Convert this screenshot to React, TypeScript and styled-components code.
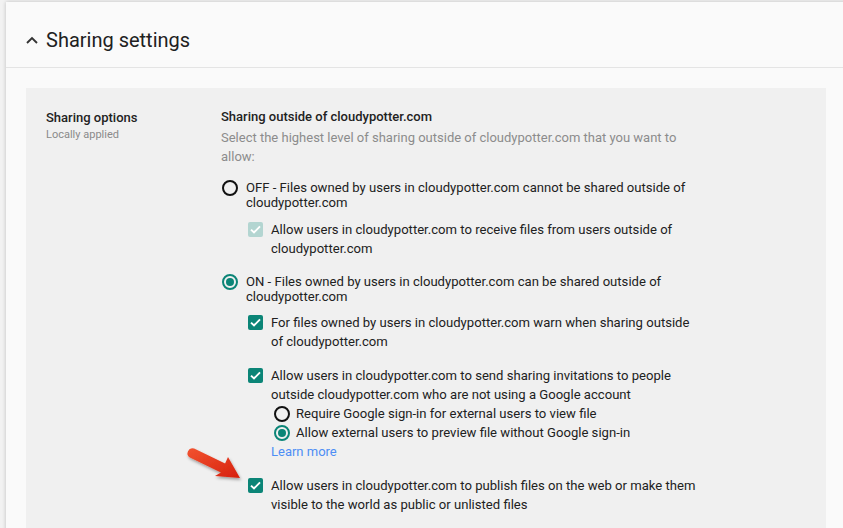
import React from "react";
import styled, { createGlobalStyle } from "styled-components";

const GlobalStyle = createGlobalStyle`
  html, body {
    margin: 0;
    padding: 0;
    background: #f2f2f2;
    font-family: Roboto, "Liberation Sans", Arial, sans-serif;
    overflow: hidden;
  }
`;

const TEAL = "#0b8577";

const Card = styled.div`
  margin: 2px 0 0 6px;
  width: 860px;
  height: 560px;
  background: #fafafa;
  box-shadow: 0 0 4px rgba(0, 0, 0, 0.22);
`;

const Header = styled.div`
  height: 55px;
  display: flex;
  align-items: center;
  padding: 10px 0 0 20px;
  border-bottom: 1px solid #e4e4e4;
`;

const Title = styled.h1`
  margin: 0 0 0 8px;
  font-size: 20px;
  font-weight: 400;
  color: #212121;
`;

const Body = styled.div`
  padding: 20px 0 0 20px;
`;

const Panel = styled.div`
  width: 800px;
  box-sizing: border-box;
  background: #f0f0f0;
  padding: 21px 20px 20px;
  display: grid;
  grid-template-columns: 175px 475px;
  border-bottom: 1px solid #f6f6f6;
  min-height: 440px;
`;

const LeftCol = styled.div`
  padding-top: 1px;
`;

const Label = styled.div`
  font-size: 13px;
  font-weight: 500;
  color: #222;
  line-height: 16px;
`;

const SubLabel = styled.div`
  font-size: 11px;
  color: #8a8a8a;
  line-height: 16px;
  margin-top: 1px;
`;

const Heading = styled.div`
  font-size: 13px;
  font-weight: 500;
  color: #222;
  line-height: 16px;
`;

const Desc = styled.div`
  font-size: 13px;
  color: #8c8c8c;
  line-height: 19px;
  margin-top: 3px;
`;

const Option = styled.div<{ indent?: number; top?: number }>`
  display: flex;
  align-items: flex-start;
  margin-left: ${(p) => p.indent ?? 0}px;
  margin-top: ${(p) => p.top ?? 0}px;
  position: relative;
`;

const OptionText = styled.div<{ lh?: number }>`
  font-size: 13.1px;
  color: #212121;
  line-height: ${(p) => p.lh ?? 19}px;
`;

const RadioCircle = styled.span<{ on?: boolean; sub?: boolean }>`
  flex: none;
  box-sizing: border-box;
  width: 16px;
  height: 16px;
  border-radius: 50%;
  border: 2px solid ${(p) => (p.on ? TEAL : "#111")};
  margin: ${(p) => (p.sub ? "2px 6px 0 0" : "0 8px 0 1px")};
  display: flex;
  align-items: center;
  justify-content: center;
  &::after {
    content: "";
    display: ${(p) => (p.on ? "block" : "none")};
    width: 8px;
    height: 8px;
    border-radius: 50%;
    background: ${TEAL};
  }
`;

const Box = styled.span<{ disabled?: boolean }>`
  flex: none;
  width: 15px;
  height: 15px;
  border-radius: 2px;
  background: ${(p) => (p.disabled ? "#b3d5d1" : TEAL)};
  margin: 2px 8px 0 0;
  display: flex;
  align-items: center;
  justify-content: center;
`;

const LearnMore = styled.a`
  display: block;
  font-size: 13px;
  line-height: 19px;
  color: #4d8ef5;
  text-decoration: none;
  margin-left: 50px;
`;

const Arrow = styled.svg`
  position: absolute;
  left: -64px;
  top: -32px;
  overflow: visible;
`;

const Check = () => (
  <svg width="11" height="9" viewBox="0 0 11 9">
    <path d="M1 4.6 L4 7.5 L10 1.3" stroke="#fff" strokeWidth="1.9" fill="none" />
  </svg>
);

type RadioProps = { on?: boolean; text: React.ReactNode; top?: number; sub?: boolean };

const Radio = ({ on, text, top, sub }: RadioProps) => (
  <Option top={top} indent={sub ? 53 : 0}>
    <RadioCircle on={on} sub={sub} />
    <OptionText lh={sub ? 19 : 15}>{text}</OptionText>
  </Option>
);

type CheckProps = { disabled?: boolean; text: React.ReactNode; top?: number; children?: React.ReactNode };

const CheckOption = ({ disabled, text, top, children }: CheckProps) => (
  <Option indent={27} top={top}>
    <Box disabled={disabled}>
      <Check />
    </Box>
    <OptionText>{text}</OptionText>
    {children}
  </Option>
);

export default function App() {
  return (
    <>
      <GlobalStyle />
      <Card>
        <Header>
          <svg width="12" height="8" viewBox="0 0 12 8">
            <path d="M1 7 L6 2 L11 7" stroke="#333" strokeWidth="1.9" fill="none" />
          </svg>
          <Title>Sharing settings</Title>
        </Header>
        <Body>
          <Panel>
            <LeftCol>
              <Label>Sharing options</Label>
              <SubLabel>Locally applied</SubLabel>
            </LeftCol>
            <div>
              <Heading>Sharing outside of cloudypotter.com</Heading>
              <Desc>Select the highest level of sharing outside of cloudypotter.com that you want to allow:</Desc>
              <Radio
                top={14}
                text="OFF - Files owned by users in cloudypotter.com cannot be shared outside of cloudypotter.com"
              />
              <CheckOption
                disabled
                top={10}
                text="Allow users in cloudypotter.com to receive files from users outside of cloudypotter.com"
              />
              <Radio
                on
                top={16}
                text="ON - Files owned by users in cloudypotter.com can be shared outside of cloudypotter.com"
              />
              <CheckOption
                top={9}
                text="For files owned by users in cloudypotter.com warn when sharing outside of cloudypotter.com"
              />
              <CheckOption
                top={15}
                text="Allow users in cloudypotter.com to send sharing invitations to people outside cloudypotter.com who are not using a Google account"
              />
              <Radio sub text="Require Google sign-in for external users to view file" />
              <Radio sub on text="Allow external users to preview file without Google sign-in" />
              <LearnMore href="#">Learn more</LearnMore>
              <CheckOption
                top={15}
                text="Allow users in cloudypotter.com to publish files on the web or make them visible to the world as public or unlisted files"
              >
                <Arrow width="60" height="40" viewBox="0 0 60 40">
                  <defs>
                    <linearGradient id="ag" x1="0" y1="0" x2="1" y2="1">
                      <stop offset="0" stopColor="#f25330" />
                      <stop offset="1" stopColor="#d6200e" />
                    </linearGradient>
                    <filter id="sh" x="-20%" y="-20%" width="150%" height="150%">
                      <feDropShadow dx="1" dy="2" stdDeviation="1.5" floodColor="#000" floodOpacity="0.35" />
                    </filter>
                  </defs>
                  <path
                    d="M10.1 4.5 L41.1 19.5 L44 13 L56 34 L31 32 L36.9 28.5 L5.9 13.5 A5 5 0 0 1 10.1 4.5 Z"
                    fill="url(#ag)"
                    filter="url(#sh)"
                  />
                </Arrow>
              </CheckOption>
            </div>
          </Panel>
        </Body>
      </Card>
    </>
  );
}
